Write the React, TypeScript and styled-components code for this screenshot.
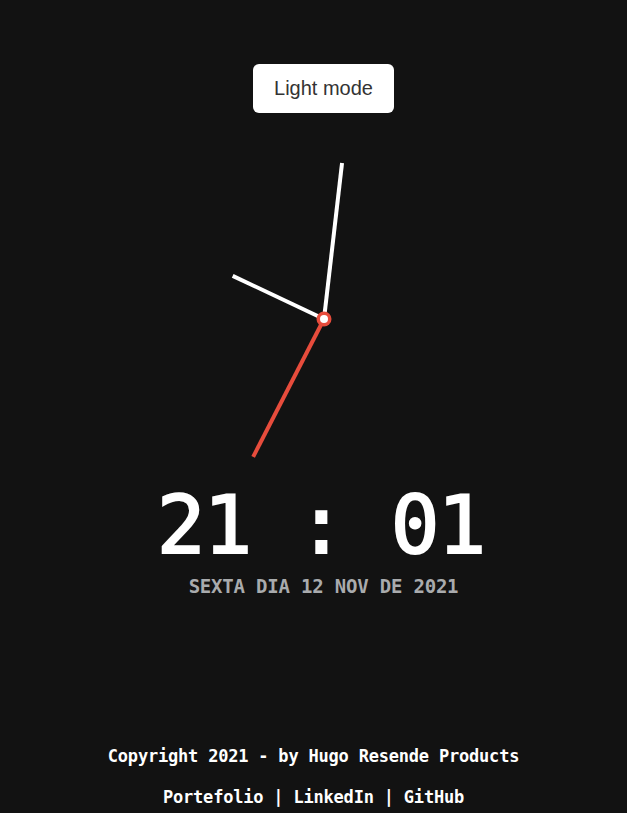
import React from 'react';
import styled, { createGlobalStyle } from 'styled-components';

const GlobalStyle = createGlobalStyle`
  html, body {
    margin: 0;
    padding: 0;
    background: #121212;
  }
`;

const Page = styled.div`
  min-height: 100vh;
  display: flex;
  flex-direction: column;
  align-items: center;
  font-family: 'DejaVu Sans Mono', 'Liberation Mono', monospace;
  color: #ffffff;
`;

const Main = styled.main`
  display: flex;
  flex-direction: column;
  align-items: center;
  padding-left: 20px;
`;

const ModeButton = styled.button`
  margin-top: 64px;
  width: 141px;
  height: 49px;
  border: none;
  border-radius: 6px;
  background: #ffffff;
  color: #333333;
  font-family: 'Liberation Sans', Arial, sans-serif;
  font-size: 20px;
  cursor: pointer;
`;

const ClockFace = styled.div`
  margin-top: 46px;
  width: 320px;
  height: 320px;
`;

const Digital = styled.div`
  margin-top: 2px;
  margin-right: 6px;
  font-size: 81px;
  font-weight: 500;
  line-height: 88px;
  white-space: pre;
  letter-spacing: -2px;
  -webkit-text-stroke: 2px #ffffff;
`;

const DateLine = styled.div`
  margin-top: 6px;
  font-size: 19px;
  font-weight: 700;
  color: #a9abad;
  letter-spacing: -0.2px;
`;

const Footer = styled.footer`
  margin-top: auto;
  padding-bottom: 5px;
  display: flex;
  flex-direction: column;
  align-items: center;
  gap: 20px;
  font-size: 17px;
  font-weight: 700;
  letter-spacing: -0.2px;
`;

const FooterLine = styled.div`
  line-height: 21px;
`;

const Hand: React.FC<{ angle: number; length: number; color: string }> = ({ angle, length, color }) => {
  const rad = (angle * Math.PI) / 180;
  const x = 160 + Math.sin(rad) * length;
  const y = 160 - Math.cos(rad) * length;
  return <line x1={160} y1={160} x2={x} y2={y} stroke={color} strokeWidth={4} />;
};

const App: React.FC = () => {
  return (
    <Page>
      <GlobalStyle />
      <Main>
        <ModeButton>Light mode</ModeButton>
        <ClockFace>
          <svg width="320" height="320" viewBox="0 0 320 320">
            <Hand angle={6.6} length={157} color="#ffffff" />
            <Hand angle={295.3} length={101} color="#ffffff" />
            <Hand angle={207.2} length={155} color="#e74c3c" />
            <circle cx={160} cy={160} r={7.5} fill="#e74c3c" />
            <circle cx={160} cy={160} r={4} fill="#ffffff" />
          </svg>
        </ClockFace>
        <Digital>21 : 01</Digital>
        <DateLine>SEXTA DIA 12 NOV DE 2021</DateLine>
      </Main>
      <Footer>
        <FooterLine>Copyright 2021 - by Hugo Resende Products</FooterLine>
        <FooterLine>Portefolio | LinkedIn | GitHub</FooterLine>
      </Footer>
    </Page>
  );
};

export default App;
